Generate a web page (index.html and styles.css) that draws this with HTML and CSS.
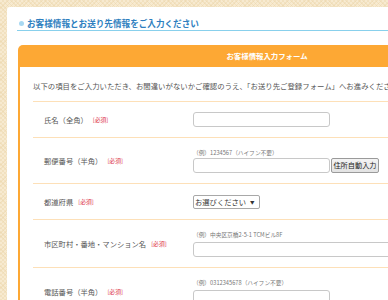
FILE: index.html
```html
<!DOCTYPE html>
<html lang="ja">
<head>
<meta charset="utf-8">
<title>お客様情報入力</title>
<link rel="stylesheet" href="styles.css">
</head>
<body>
<div class="panel">
  <h2 class="heading"><span class="dot"></span>お客様情報とお送り先情報をご入力ください</h2>
  <div class="formbox">
    <div class="formbox-head">お客様情報入力フォーム</div>
    <div class="formbox-body">
      <p class="intro">以下の項目をご入力いただき、お間違いがないかご確認のうえ、「お送り先ご登録フォーム」へお進みください。</p>
      <div class="row">
        <div class="label">氏名（全角）<span class="req">[必須]</span></div>
        <div class="value"><span class="input"></span></div>
      </div>
      <div class="row">
        <div class="label">郵便番号（半角）<span class="req">[必須]</span></div>
        <div class="value">
          <div class="example">（例）1234567（ハイフン不要）</div>
          <div class="line"><span class="input"></span><span class="btn">住所自動入力</span></div>
        </div>
      </div>
      <div class="row">
        <div class="label">都道府県<span class="req">[必須]</span></div>
        <div class="value"><span class="select">お選びください<span class="arrow">▼</span></span></div>
      </div>
      <div class="row tall">
        <div class="label">市区町村・番地・マンション名<span class="req">[必須]</span></div>
        <div class="value">
          <div class="example">（例）中央区京橋2-5-1 TCMビル8F</div>
          <span class="input wide"></span>
        </div>
      </div>
      <div class="row tall">
        <div class="label">電話番号（半角）<span class="req">[必須]</span></div>
        <div class="value">
          <div class="example">（例）0312345678（ハイフン不要）</div>
          <span class="input"></span>
        </div>
      </div>
    </div>
  </div>
</div>
</body>
</html>
```
FILE: styles.css
```css
html, body {
  overflow: hidden;
}
body {
  margin: 0;
  padding: 7px 0 0 7px;
  font-family: "Noto Sans CJK JP", "Noto Sans", sans-serif;
  background-color: #f7ead0;
  background-image:
    repeating-linear-gradient(45deg, rgba(232, 208, 160, 0.35) 0 1px, transparent 1px 3px),
    repeating-linear-gradient(-45deg, rgba(232, 208, 160, 0.35) 0 1px, transparent 1px 3px);
  height: 300px;
  box-sizing: border-box;
}
.panel {
  width: 540px;
  height: 400px;
  background: #fff;
  border-radius: 3px 0 0 0;
  padding: 10px 0 0 10px;
  box-sizing: border-box;
}
.heading {
  margin: 0;
  display: flex;
  align-items: center;
  font-size: 8.6px;
  line-height: 12px;
  font-weight: bold;
  color: #2f7fc0;
  padding: 0 0 1px 2px;
  border-bottom: 1px solid #88d0ec;
}
.dot {
  width: 5px;
  height: 5px;
  border-radius: 50%;
  background: #a8d8f2;
  margin-right: 3px;
}
.formbox {
  margin: 14px 0 0 1px;
  width: 498px;
}
.formbox-head {
  background: #fda834;
  border-radius: 5px 5px 0 0;
  height: 22px;
  line-height: 22px;
  text-align: center;
  color: #fff;
  font-weight: bold;
  font-size: 7.4px;
}
.formbox-body {
  border-left: 2px solid #fda834;
  border-right: 2px solid #fda834;
  padding: 14px 13px 0 13px;
}
.intro {
  margin: 0 0 10px;
  font-size: 7.4px;
  line-height: 10px;
  color: #555;
  white-space: nowrap;
}
.row {
  display: grid;
  grid-template-columns: 149px 1fr;
  align-items: center;
  border-top: 1px solid #fde0b8;
  padding: 10px 0;
  min-height: 15px;
}
.label {
  padding-left: 11px;
  font-size: 7.3px;
  line-height: 10px;
  color: #555;
  display: flex;
  align-items: center;
}
.req {
  color: #dc2f45;
  font-size: 5.8px;
  margin-left: 5px;
}
.value {
  padding-left: 11px;
  display: flex;
  flex-direction: column;
  align-items: flex-start;
}
.example {
  font-size: 5.7px;
  line-height: 9px;
  color: #777;
  margin-bottom: 1px;
}
.row.tall .example {
  margin-bottom: 3px;
}
.line {
  display: flex;
  align-items: center;
  gap: 1px;
}
.input {
  display: block;
  width: 137px;
  height: 15px;
  box-sizing: border-box;
  border: 1px solid #c8c8c8;
  border-radius: 3px;
  background: #fff;
}
.input.wide {
  width: 260px;
}
.btn {
  display: block;
  height: 15px;
  width: 48px;
  box-sizing: border-box;
  border: 1px solid #9a9a9a;
  border-radius: 2px;
  background: linear-gradient(#f4f4f4, #e2e2e2);
  font-size: 7.2px;
  line-height: 13px;
  text-align: center;
  color: #222;
}
.select {
  display: flex;
  align-items: center;
  height: 14px;
  width: 67px;
  box-sizing: border-box;
  border: 1px solid #a8a8a8;
  border-radius: 2px;
  padding-left: 1px;
  font-size: 7.3px;
  line-height: 12px;
  color: #333;
  margin: 0.5px 0;
}
.arrow {
  font-size: 4.5px;
  margin-left: 4px;
}
```
